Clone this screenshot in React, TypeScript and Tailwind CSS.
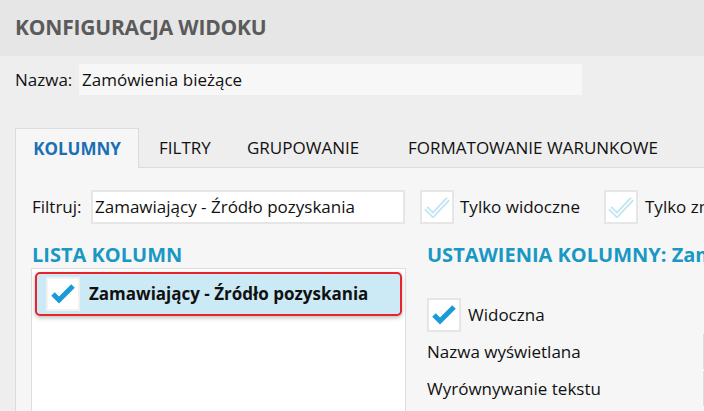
import React from 'react';

const font = { fontFamily: '"Open Sans", "Noto Sans", sans-serif' };

const Check: React.FC<{ light?: boolean }> = ({ light }) => (
  <svg width="26" height="22" viewBox="0 0 26 22">
    {light ? (
      <>
        <path d="M2 12 L9 19 L24 3" fill="none" stroke="#bfe4f3" strokeWidth="5" strokeLinejoin="miter" />
        <path d="M2 12 L9 19 L24 3" fill="none" stroke="#ffffff" strokeWidth="1.6" strokeLinejoin="miter" />
      </>
    ) : (
      <path d="M3 11 L9 17 L23 3" fill="none" stroke="#1a9ad6" strokeWidth="5" strokeLinejoin="miter" />
    )}
  </svg>
);

const Box: React.FC<{ light?: boolean; className?: string }> = ({ light, className }) => (
  <div className={`flex h-[34px] w-[34px] shrink-0 items-center justify-center border-2 border-[#e6e6e6] bg-white ${className ?? ''}`}>
    <Check light={light} />
  </div>
);

export default function App() {
  return (
    <div className="h-[411px] w-[704px] overflow-hidden bg-[#eeeeee] text-[17px] text-[#111]" style={font}>
      {/* header */}
      <div className="flex h-[56px] items-center bg-[#e6e6e6] px-[15px]">
        <h1 className="text-[21px] font-bold tracking-[-0.2px] text-[#5b5b5b]">KONFIGURACJA WIDOKU</h1>
      </div>

      {/* name */}
      <div className="mt-[8px] flex items-center pl-[15px]">
        <span className="w-[64px] shrink-0 whitespace-nowrap">Nazwa:</span>
        <div className="flex h-[31px] w-[503px] shrink-0 items-center bg-[#f7f7f7] pl-[3px]">Zamówienia bieżące</div>
      </div>

      {/* tabs */}
      <div className="mt-[33px] flex h-[40px] items-end pl-[15px] whitespace-nowrap">
        <div className="flex h-[40px] w-[124px] shrink-0 items-center justify-center border border-b-0 border-[#dcdcdc] bg-[#f6f6f6] font-bold text-[#1b6fb3]">
          KOLUMNY
        </div>
        <div className="flex h-[40px] flex-1 items-center border-b border-[#dcdcdc]">
          <span className="ml-[20px] w-[88px] shrink-0">FILTRY</span>
          <span className="w-[161px] shrink-0">GRUPOWANIE</span>
          <span className="shrink-0">FORMATOWANIE WARUNKOWE</span>
        </div>
      </div>

      {/* panel */}
      <div className="ml-[15px] h-[243px] overflow-hidden border-l border-[#dcdcdc] bg-[#f6f6f6] whitespace-nowrap">
        <div className="flex items-center pt-[22px]">
          <span className="ml-[16px] w-[59px] shrink-0">Filtruj:</span>
          <div className="flex h-[34px] w-[314px] shrink-0 items-center border-2 border-[#e6e6e6] bg-white pl-[2px]">
            Zamawiający - Źródło pozyskania
          </div>
          <Box light className="ml-[15px]" />
          <span className="ml-[6px] w-[144px] shrink-0">Tylko widoczne</span>
          <Box light />
          <span className="ml-[7px] shrink-0">Tylko zmienione</span>
        </div>

        <div className="mt-[18px] flex">
          <div className="ml-[15px] w-[375px] shrink-0">
            <div className="pl-[1px] text-[20px] font-bold leading-[26px] text-[#1998c4]">LISTA KOLUMN</div>
            <div className="h-[150px] border border-[#dedede] bg-white p-[3px]">
              <div className="flex h-[44px] items-center rounded-[5px] border-2 border-[#e8232b] bg-[#cce9f6] pl-[9px] shadow-[0_2px_4px_rgba(0,0,0,0.25)]">
                <Box className="h-[32px] w-[32px] border-[#f1f1f1]" />
                <span className="ml-[9px] font-bold">Zamawiający - Źródło pozyskania</span>
              </div>
            </div>
          </div>

          <div className="ml-[21px] shrink-0">
            <div className="text-[20px] font-bold leading-[26px] text-[#1998c4]">USTAWIENIA KOLUMNY: Zamawiający</div>
            <div className="mt-[30px] flex items-center">
              <Box />
              <span className="ml-[7px]">Widoczna</span>
            </div>
            <div className="mt-[1px] flex h-[37px] items-center">
              <span className="w-[276px] shrink-0">Nazwa wyświetlana</span>
              <div className="h-[35px] w-[20px] shrink-0 border border-[#dcdcdc] bg-white" />
            </div>
            <div className="flex h-[37px] items-center">
              <span className="w-[276px] shrink-0">Wyrównywanie tekstu</span>
              <div className="h-[35px] w-[20px] shrink-0 border border-[#dcdcdc] bg-white" />
            </div>
          </div>
        </div>
      </div>
    </div>
  );
}
